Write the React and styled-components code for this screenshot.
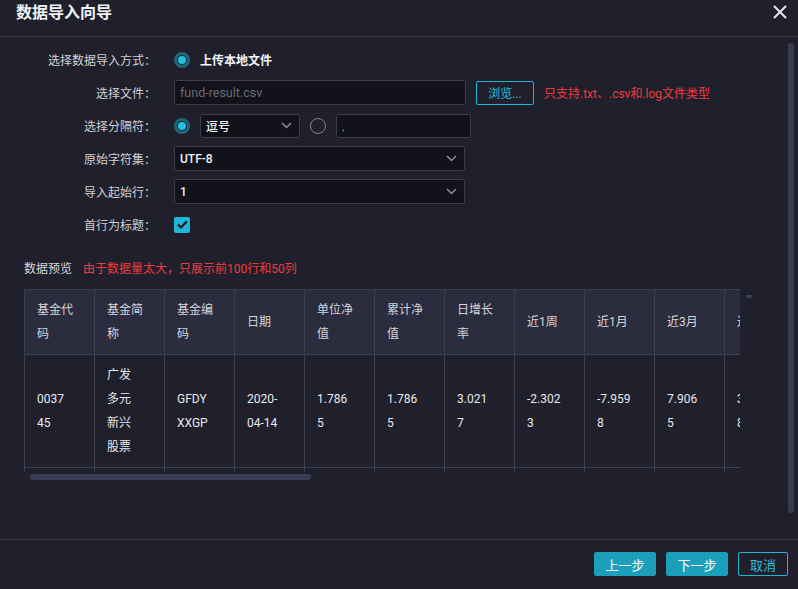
import React from "react";
import styled, { createGlobalStyle } from "styled-components";

const Global = createGlobalStyle`
  html, body { margin: 0; padding: 0; background: #1f202b; }
  body { font-family: "Roboto", "Noto Sans CJK SC", sans-serif; }
  * { box-sizing: border-box; }
`;

const Dialog = styled.div`
  width: 798px;
  height: 589px;
  background: #1f202b;
  display: flex;
  flex-direction: column;
  color: #e4e5ea;
  font-size: 12px;
  overflow: hidden;
`;

const Header = styled.div`
  height: 37px;
  flex: none;
  display: flex;
  align-items: flex-start;
  justify-content: space-between;
  padding: 0 10px 0 16px;
  border-bottom: 1px solid #3a3b4a;
`;

const Title = styled.div`
  font-size: 16px;
  font-weight: 700;
  line-height: 26px;
  color: #f2f3f6;
`;

const CloseBtn = styled.div`
  width: 16px;
  height: 16px;
  margin-top: 4px;
  display: flex;
  align-items: center;
  justify-content: center;
`;

const Body = styled.div`
  flex: 1;
  position: relative;
  padding: 10px 24px 0;
`;

const VScroll = styled.div`
  position: absolute;
  right: 4px;
  top: 6px;
  width: 6px;
  height: 470px;
  border-radius: 3px;
  background: #3a3c4d;
`;

const Form = styled.div`
  display: flex;
  flex-direction: column;
  gap: 8px;
`;

const Row = styled.div`
  display: flex;
  align-items: center;
  height: 25px;
`;

const Label = styled.div`
  width: 132px;
  flex: none;
  text-align: right;
  color: #cfd0d7;
  margin-right: 18px;
`;

const Controls = styled.div`
  display: flex;
  align-items: center;
  gap: ${(p) => p.$gap || 10}px;
`;

const Radio = styled.span`
  width: 16px;
  height: 16px;
  border-radius: 50%;
  flex: none;
  display: inline-flex;
  align-items: center;
  justify-content: center;
  border: ${(p) => (p.$on ? "3px solid #1d6677" : "1.5px solid #7e808c")};
  &::after {
    content: "";
    width: 8px;
    height: 8px;
    border-radius: 50%;
    background: ${(p) => (p.$on ? "#22c1e2" : "transparent")};
  }
`;

const OptionText = styled.span`
  color: #f4f5f8;
  font-weight: 600;
`;

const Field = styled.div`
  width: ${(p) => p.$w}px;
  height: ${(p) => p.$h || 25}px;
  background: #11121a;
  border: 1px solid #3b3d4b;
  border-radius: 2px;
  display: flex;
  align-items: center;
  justify-content: space-between;
  padding: 0 7px 0 5px;
  color: ${(p) => (p.$muted ? "#6a6c79" : "#f2f3f6")};
  font-size: ${(p) => (p.$muted ? 12.5 : 12)}px;
  font-weight: ${(p) => (p.$bold ? 500 : 400)};
`;

const BrowseBtn = styled.div`
  width: 58px;
  height: 24px;
  border: 1px solid #1fb6d6;
  border-radius: 2px;
  color: #2cc0de;
  display: flex;
  align-items: center;
  justify-content: center;
  font-size: 12px;
`;

const Hint = styled.span`
  color: #f03a3f;
  font-size: 12px;
`;

const Check = styled.span`
  width: 16px;
  height: 16px;
  border-radius: 2px;
  background: #22b6d6;
  display: inline-flex;
  align-items: center;
  justify-content: center;
`;

const PreviewHead = styled.div`
  margin-top: 20px;
  height: 20px;
  display: flex;
  align-items: center;
  gap: 11px;
`;

const PreviewTitle = styled.span`
  color: #d6d7dd;
`;

const PreviewArea = styled.div`
  margin-top: 12px;
  display: flex;
  align-items: flex-start;
`;

const Viewport = styled.div`
  width: 716px;
  overflow: hidden;
  flex: none;
`;

const Table = styled.table`
  border-collapse: collapse;
  table-layout: fixed;
  width: 770px;
`;

const Th = styled.th`
  width: 70px;
  background: #2b2d3e;
  border: 1px solid #3d3f52;
  padding: 8px 0 8px 12px;
  text-align: left;
  vertical-align: middle;
  font-weight: 400;
  color: #d4d5dc;
  line-height: 24px;
`;

const Td = styled.td`
  border: 1px solid #3d3f52;
  padding: 8px 0 8px 12px;
  vertical-align: middle;
  color: #e8e9ee;
  line-height: 24px;
`;

const Ticks = styled.div`
  display: flex;
  height: 4px;
`;

const Tick = styled.span`
  width: 70px;
  flex: none;
  border-left: 1px solid #3d3f52;
`;

const Cell = styled.div`
  width: ${(p) => p.$w}px;
  word-break: break-all;
`;

const SideThumb = styled.div`
  width: 6px;
  height: 3px;
  background: #3d3f52;
  margin: 6px 0 0 6px;
`;

const HTrack = styled.div`
  padding: 2px 0 0 6px;
`;

const HThumb = styled.div`
  width: 281px;
  height: 6px;
  border-radius: 3px;
  background: #3c3d52;
`;

const Footer = styled.div`
  height: 50px;
  flex: none;
  border-top: 1px solid #3a3b48;
  display: flex;
  justify-content: flex-end;
  align-items: flex-start;
  gap: 10px;
  padding: 12px 10px 0 0;
`;

const Btn = styled.div`
  width: ${(p) => p.$w}px;
  height: 24px;
  border-radius: 2px;
  display: flex;
  align-items: center;
  justify-content: center;
  font-size: 13px;
  background: ${(p) => (p.$primary ? "#1b9fbb" : "transparent")};
  border: 1px solid ${(p) => (p.$primary ? "#1b9fbb" : "#1fb6d6")};
  color: ${(p) => (p.$primary ? "#ffffff" : "#2cc0de")};
`;

const Chevron = () => (
  <svg width="11" height="7" viewBox="0 0 11 7">
    <path d="M1 1l4.5 4.5L10 1" fill="none" stroke="#8b8d99" strokeWidth="1.5" />
  </svg>
);

const headers = ["基金代码", "基金简称", "基金编码", "日期", "单位净值", "累计净值", "日增长率", "近1周", "近1月", "近3月", "近6月"];
const row = ["003745", "广发多元新兴股票", "GFDYXXGP", "2020-04-14", "1.7865", "1.7865", "3.0217", "-2.3023", "-7.9598", "7.9065", "31.258"];

export default function App() {
  return (
    <Dialog>
      <Global />
      <Header>
        <Title>数据导入向导</Title>
        <CloseBtn>
          <svg width="14" height="14" viewBox="0 0 14 14">
            <path d="M1.5 1.5l11 11M12.5 1.5l-11 11" stroke="#e6e7eb" strokeWidth="2" strokeLinecap="round" />
          </svg>
        </CloseBtn>
      </Header>
      <Body>
        <VScroll />
        <Form>
          <Row>
            <Label>选择数据导入方式：</Label>
            <Controls>
              <Radio $on />
              <OptionText>上传本地文件</OptionText>
            </Controls>
          </Row>
          <Row>
            <Label>选择文件：</Label>
            <Controls>
              <Field $w={292} $muted>fund-result.csv</Field>
              <BrowseBtn>浏览...</BrowseBtn>
              <Hint>只支持.txt、.csv和.log文件类型</Hint>
            </Controls>
          </Row>
          <Row>
            <Label>选择分隔符：</Label>
            <Controls $gap={10}>
              <Radio $on />
              <Field $w={100} $h={24} $bold>
                逗号
                <Chevron />
              </Field>
              <Radio $on={false} />
              <Field $w={135} $h={24} $muted>,</Field>
            </Controls>
          </Row>
          <Row>
            <Label>原始字符集：</Label>
            <Field $w={291} $bold>
              UTF-8
              <Chevron />
            </Field>
          </Row>
          <Row>
            <Label>导入起始行：</Label>
            <Field $w={291} $bold>
              1
              <Chevron />
            </Field>
          </Row>
          <Row>
            <Label>首行为标题：</Label>
            <Check>
              <svg width="11" height="9" viewBox="0 0 11 9">
                <path d="M1 4.5l3 3L10 1.2" fill="none" stroke="#15161d" strokeWidth="2" />
              </svg>
            </Check>
          </Row>
        </Form>
        <PreviewHead>
          <PreviewTitle>数据预览</PreviewTitle>
          <Hint>由于数据量太大，只展示前100行和50列</Hint>
        </PreviewHead>
        <PreviewArea>
          <div>
            <Viewport>
              <Table>
                <thead>
                  <tr>
                    {headers.map((h) => (
                      <Th key={h}>
                        <Cell $w={38}>{h}</Cell>
                      </Th>
                    ))}
                  </tr>
                </thead>
                <tbody>
                  <tr>
                    {row.map((v, i) => (
                      <Td key={i}>
                        <Cell $w={33.55}>{v}</Cell>
                      </Td>
                    ))}
                  </tr>
                </tbody>
              </Table>
              <Ticks>
                {row.map((v, i) => (
                  <Tick key={i} />
                ))}
              </Ticks>
            </Viewport>
            <HTrack>
              <HThumb />
            </HTrack>
          </div>
          <SideThumb />
        </PreviewArea>
      </Body>
      <Footer>
        <Btn $primary $w={62}>上一步</Btn>
        <Btn $primary $w={62}>下一步</Btn>
        <Btn $w={50}>取消</Btn>
      </Footer>
    </Dialog>
  );
}
